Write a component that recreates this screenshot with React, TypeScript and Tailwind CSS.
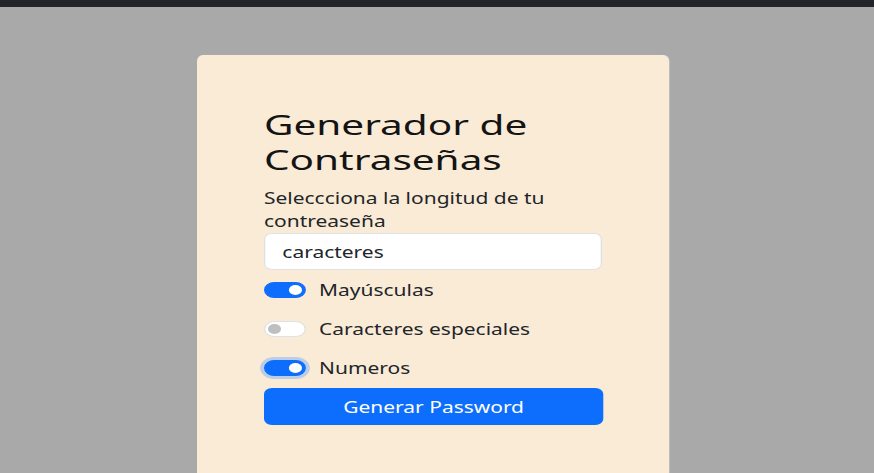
import React from "react";

function Switch({ on, focus }: { on: boolean; focus?: boolean }) {
  return (
    <span
      className={
        "relative inline-flex h-[16px] w-[32px] shrink-0 items-center rounded-full border " +
        (on ? "border-[#0d6efd] bg-[#0d6efd] " : "border-[#dee2e6] bg-white ") +
        (focus ? "ring-[3px] ring-[#bccde8]" : "")
      }
    >
      <span
        className={
          "absolute top-1/2 h-[10px] w-[10px] -translate-y-1/2 rounded-full " +
          (on ? "right-[2px] bg-white" : "left-[2px] bg-[#bfbfbf]")
        }
      />
    </span>
  );
}

export default function App() {
  return (
    <div
      className="flex min-h-[473px] flex-col overflow-hidden bg-[#a9a9a9]"
      style={{ fontFamily: '"Noto Sans", "Open Sans", sans-serif' }}
    >
      <div className="h-[7px] bg-[#212529]" />
      <div className="flex flex-1 pl-[197px] pt-[48px]">
        <div className="w-[472px] rounded-t-[6px] bg-[#faebd7] pl-[67px] pt-[52px] pb-[48px] shadow-[1px_0_1px_rgba(255,255,255,0.25)]">
          <div className="flex w-[258px] origin-top-left scale-x-[1.31] flex-col">
            <h1 className="w-[225px] origin-left scale-x-[1.145] text-[27px] leading-[35px] text-[#141414]">
              Generador de Contraseñas
            </h1>
            <p className="mt-[10px] text-[16px] leading-[23px] text-[#212529]">
              Seleccciona la longitud de tu contreaseña
            </p>
            <div className="flex h-[37px] items-center rounded-[6px] border border-[#dee2e6] bg-white pl-[13px] text-[16px] leading-[24px] text-[#212529]">
              caracteres
            </div>
            <div className="mt-[8px] flex h-[24px] items-center gap-[10px] text-[16px] leading-[24px] text-[#212529]">
              <Switch on />
              <span>Mayúsculas</span>
            </div>
            <div className="mt-[15px] flex h-[24px] items-center gap-[10px] text-[16px] leading-[24px] text-[#212529]">
              <Switch on={false} />
              <span>Caracteres especiales</span>
            </div>
            <div className="mt-[15px] flex h-[24px] items-center gap-[10px] text-[16px] leading-[24px] text-[#212529]">
              <Switch on focus />
              <span>Numeros</span>
            </div>
            <button className="mt-[8px] h-[37px] w-[259px] rounded-[6px] bg-[#0d6efd] text-[16px] leading-[24px] text-white">
              Generar Password
            </button>
          </div>
        </div>
      </div>
    </div>
  );
}
